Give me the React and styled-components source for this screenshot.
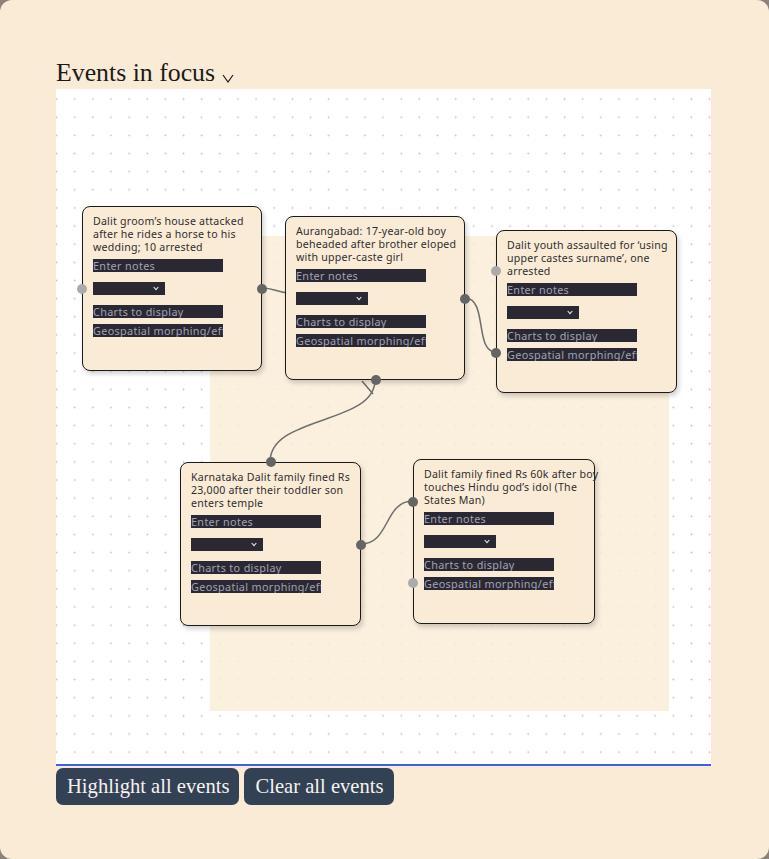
import styled, { createGlobalStyle } from "styled-components";

// Global reset
const GlobalStyle = createGlobalStyle`
    html, body {
        margin: 0;
        padding: 0;
        background: #8c827a;
    }
    * {
        box-sizing: border-box;
    }
`;

const Panel = styled.div`
    width: 769px;
    min-height: 859px;
    background: #faebd7;
    border-radius: 12px;
    padding: 57px 58px 0 56px;
    overflow: hidden;
`;

const TitleRow = styled.div`
    display: flex;
    align-items: baseline;
    gap: 7px;
    height: 32px;
`;

const Title = styled.h2`
    margin: 0;
    font-family: "Liberation Serif", "Times New Roman", serif;
    font-weight: 400;
    font-size: 25.8px;
    line-height: 32px;
    color: #1c1a18;
`;

const Chevron = styled.svg`
    width: 12px;
    height: 9px;
    align-self: flex-end;
    margin-bottom: 6px;
`;

const Canvas = styled.div`
    position: relative;
    width: 655px;
    height: 677px;
    background-color: #ffffff;
    background-image: radial-gradient(circle, #c4c4c4 0.8px, transparent 1.1px);
    background-size: 18.15px 18.15px;
    background-position: -8.5px 1px;
    border-bottom: 2px solid #3b62e4;
    overflow: hidden;
`;

const Group = styled.div`
    position: absolute;
    left: ${(p) => p.$x}px;
    top: ${(p) => p.$y}px;
    width: ${(p) => p.$w}px;
    height: ${(p) => p.$h}px;
    background: rgba(250, 235, 215, 0.82);
`;

const Edges = styled.svg`
    position: absolute;
    left: 0;
    top: 0;
    width: 655px;
    height: 675px;
    overflow: visible;
`;

const Node = styled.div`
    position: absolute;
    left: ${(p) => p.$x}px;
    top: ${(p) => p.$y}px;
    width: ${(p) => p.$w}px;
    height: ${(p) => p.$h}px;
    background: #faebd7;
    border: 1px solid #1a1a1a;
    border-radius: 8px;
    box-shadow: 2px 3px 5px rgba(0, 0, 0, 0.18);
    padding: 8px 10px 0 10px;
    display: flex;
    flex-direction: column;
    font-family: "Noto Sans", "Liberation Sans", sans-serif;
`;

const NodeTitle = styled.div`
    font-size: 10.6px;
    letter-spacing: 0.22px;
    line-height: 13px;
    color: #2e2e2e;
    white-space: nowrap;
    margin-bottom: 5px;
`;

const Field = styled.input`
    width: 130px;
    height: 13px;
    padding: 0;
    margin: 0 0 ${(p) => p.$gap}px 0;
    border: none;
    outline: none;
    background: #2a2933;
    font-family: "Noto Sans", "Liberation Sans", sans-serif;
    font-size: 10.8px;
    letter-spacing: 0.35px;
    line-height: 13px;
    color: #d0d0d8;
    &::placeholder {
        color: #a3a1b3;
    }
`;

const SelectWrap = styled.div`
    position: relative;
    width: 72px;
    height: 13px;
    margin-bottom: 10px;
    background: #2a2933;
`;

const Select = styled.select`
    appearance: none;
    width: 100%;
    height: 100%;
    border: none;
    background: transparent;
    padding: 0;
    color: #d0d0d8;
`;

const SelectArrow = styled.svg`
    position: absolute;
    right: 6px;
    top: 4px;
    width: 6px;
    height: 5px;
    pointer-events: none;
`;

const Handle = styled.div`
    position: absolute;
    width: 10px;
    height: 10px;
    border-radius: 50%;
    background: ${(p) => (p.$dark ? "#656565" : "#ababab")};
    ${(p) => p.$side === "left" && `left: -6px; top: ${p.$at - 5}px;`}
    ${(p) => p.$side === "right" && `right: -6px; top: ${p.$at - 5}px;`}
    ${(p) => p.$side === "top" && `top: -6px; left: ${p.$at - 5}px;`}
    ${(p) => p.$side === "bottom" && `bottom: -6px; left: ${p.$at - 5}px;`}
`;

const ButtonRow = styled.div`
    display: flex;
    gap: 5px;
    margin-top: 2px;
`;

const Button = styled.button`
    background: #334155;
    color: #f6f3ee;
    border: none;
    border-radius: 7px;
    height: 37px;
    padding: 0 10px 0 11px;
    font-family: "Liberation Serif", "Times New Roman", serif;
    font-size: 20.6px;
    cursor: pointer;
`;

const nodes = [
    {
        id: 1, x: 26, y: 117, w: 180, h: 165,
        lines: ["Dalit groom’s house attacked", "after he rides a horse to his", "wedding; 10 arrested"],
        handles: [
            { side: "left", at: 82 },
            { side: "right", at: 82, dark: true }
        ]
    },
    {
        id: 2, x: 229, y: 127, w: 180, h: 164,
        lines: ["Aurangabad: 17-year-old boy", "beheaded after brother eloped", "with upper-caste girl"],
        handles: [
            { side: "right", at: 82, dark: true },
            { side: "bottom", at: 90, dark: true }
        ]
    },
    {
        id: 3, x: 440, y: 141, w: 181, h: 163,
        lines: ["Dalit youth assaulted for ‘using", "upper castes surname’, one", "arrested"],
        handles: [
            { side: "left", at: 40 },
            { side: "left", at: 122, dark: true }
        ]
    },
    {
        id: 4, x: 124, y: 373, w: 181, h: 164,
        lines: ["Karnataka Dalit family fined Rs", "23,000 after their toddler son", "enters temple"],
        handles: [
            { side: "top", at: 90, dark: true },
            { side: "right", at: 82, dark: true }
        ]
    },
    {
        id: 5, x: 357, y: 370, w: 182, h: 165,
        lines: ["Dalit family fined Rs 60k after boy", "touches Hindu god’s idol (The", "States Man)"],
        handles: [
            { side: "left", at: 42, dark: true },
            { side: "left", at: 123 }
        ]
    }
];

function EventNode({ node }) {
    return (
        <Node $x={node.x} $y={node.y} $w={node.w} $h={node.h}>
            <NodeTitle>
                {node.lines.map((l, i) => (
                    <div key={i}>{l}</div>
                ))}
            </NodeTitle>
            <Field placeholder="Enter notes" $gap={10} />
            <SelectWrap>
                <Select defaultValue="">
                    <option value=""></option>
                </Select>
                <SelectArrow viewBox="0 0 6 5">
                    <polyline points="0.7,1 3,3.6 5.3,1" fill="none" stroke="#e8e8ee" strokeWidth="1.1" />
                </SelectArrow>
            </SelectWrap>
            <Field placeholder="Charts to display" $gap={6} />
            <Field placeholder="Geospatial morphing/effects" $gap={0} />
            {node.handles.map((h, i) => (
                <Handle key={i} $side={h.side} $at={h.at} $dark={h.dark} />
            ))}
        </Node>
    );
}

export default function App() {
    return (
        <>
            <GlobalStyle />
            <Panel>
                <TitleRow>
                    <Title>Events in focus</Title>
                    <Chevron viewBox="0 0 12 9">
                        <polyline points="1,1 6,8 11,1" fill="none" stroke="#1c1a18" strokeWidth="1.2" />
                    </Chevron>
                </TitleRow>
                <Canvas>
                    <Group $x={154} $y={147} $w={459} $h={475} />
                    <Edges viewBox="0 0 655 675">
                        <g transform="translate(-56 -89)" fill="none" stroke="#6e6e6e" strokeWidth="1.5">
                            <path d="M262,288 C276,288 278,294 300,294" />
                            <path d="M465,298 C488,298 474,352 496,352" />
                            <path d="M375,380 C375,425 270,415 270,462" />
                            <path d="M362,381 L373,394" />
                            <path d="M361,544 C390,544 384,501 413,501" />
                        </g>
                    </Edges>
                    {nodes.map((n) => (
                        <EventNode key={n.id} node={n} />
                    ))}
                </Canvas>
                <ButtonRow>
                    <Button>Highlight all events</Button>
                    <Button>Clear all events</Button>
                </ButtonRow>
            </Panel>
        </>
    );
}
